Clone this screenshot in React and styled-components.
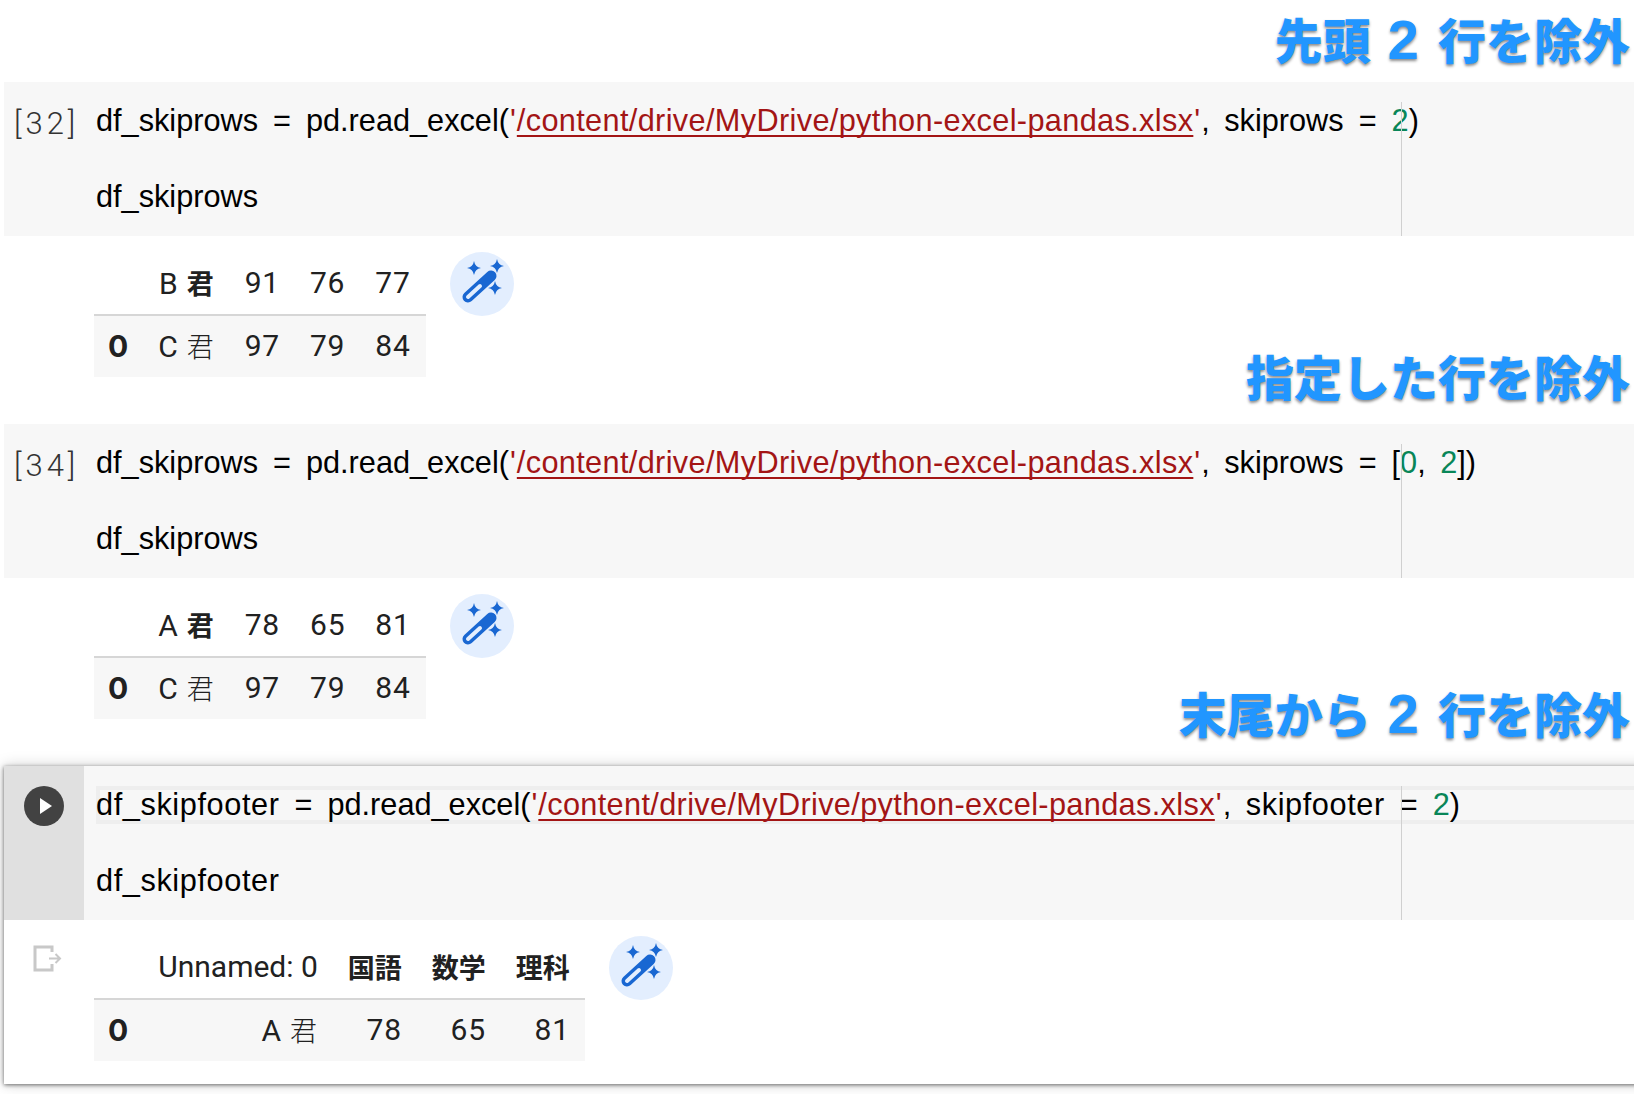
import styled, { createGlobalStyle } from "styled-components";

const GlobalStyle = createGlobalStyle`
  html, body {
    margin: 0;
    background: #fff;
  }
`;

const Page = styled.div`
  width: 1634px;
  height: 1094px;
  overflow: hidden;
  font-family: "Liberation Sans", "Noto Sans CJK JP", sans-serif;
`;

const Header = styled.div`
  height: 82px;
  margin-left: 4px;
  display: flex;
  justify-content: flex-end;
  align-items: flex-end;
`;

const Caption = styled.div`
  margin-left: auto;
  margin-right: 4px;
  margin-bottom: ${(p) => p.$bottom}px;
  align-self: flex-end;
  font-family: "Noto Sans CJK JP", sans-serif;
  font-size: 48px;
  font-weight: 900;
  line-height: 56px;
  white-space: nowrap;
  color: #2196ff;
  -webkit-text-stroke: 8px #fff;
  paint-order: stroke fill;
  text-shadow: 0 2px 3px rgba(0, 0, 0, 0.45);
`;

const CaptionDigit = styled.span`
  margin: 0 19px 0 17px;
  font-family: "Liberation Sans", sans-serif;
  font-size: 56px;
  font-weight: 700;
  line-height: 56px;
`;

const Focused = styled.div`
  margin-left: 4px;
  margin-right: -20px;
  height: 318px;
  background: #fff;
  box-shadow: 0 1px 4px rgba(0, 0, 0, 0.55), 0 0 14px rgba(0, 0, 0, 0.18);
`;

const Cell = styled.div`
  display: flex;
  height: 154px;
  margin-left: ${(p) => (p.$active ? 0 : 4)}px;
  background: #f7f7f7;
`;

const Gutter = styled.div`
  flex: none;
  width: 92px;
  padding: 27px 0 0 10px;
  box-sizing: border-box;
  font-family: Roboto, sans-serif;
  font-size: 31px;
  font-weight: 300;
  line-height: 30px;
  letter-spacing: 4px;
  color: #333;
`;

const RunGutter = styled.div`
  flex: none;
  width: 80px;
  margin-right: 12px;
  padding: 20px 0 0 20px;
  box-sizing: border-box;
  background: #e0e0e0;
`;

const Code = styled.div`
  position: relative;
  flex: 1;
  padding-top: 20px;
  display: flex;
  flex-direction: column;
  gap: 38px;
  font-size: 30.7px;
  color: #000;
`;

const Line = styled.div`
  height: 38px;
  line-height: 38px;
  white-space: pre;
`;

const ActiveLine = styled(Line)`
  box-sizing: border-box;
  margin-right: 20px;
  border: solid #eeeeee;
  border-width: 4px 0 4px 4px;
  line-height: 30px;
  text-indent: -4px;
`;

const Name = styled.span`
  letter-spacing: ${(p) => (p.$wide ? 0.6 : 0)}px;
`;

const Quote = styled.span`
  color: #a31515;
  margin: 0 1px;
`;

const Str = styled.span`
  color: #a31515;
  letter-spacing: 0.35px;
  text-decoration: underline 2px #a31515;
  text-underline-offset: 4px;
  text-decoration-skip-ink: none;
`;

const Sep = styled.span`
  margin-right: 6px;
`;

const Num = styled.span`
  color: #098658;
`;

const Op = styled.span`
  margin: 0 15px;
`;

const Ruler = styled.div`
  position: absolute;
  left: ${(p) => p.$left}px;
  top: 20px;
  bottom: 0;
  width: 1.5px;
  background: #d0d0d0;
`;

const Output = styled.div`
  display: flex;
  align-items: flex-start;
  height: ${(p) => p.$height}px;
  margin-left: 4px;
  padding-top: 16px;
  box-sizing: border-box;
`;

const FocusedOutput = styled(Output)`
  margin-left: 0;
`;

const OutGutter = styled.div`
  flex: none;
  width: 90px;
  padding: 9px 0 0 29px;
  box-sizing: border-box;
`;

const Frame = styled.table`
  border-collapse: collapse;
  font-family: Roboto, "Noto Sans CJK JP", sans-serif;
  font-size: 30px;
  color: #212121;
`;

const HeadCell = styled.th`
  height: 63px;
  padding: 0 15px 2px;
  box-sizing: border-box;
  font-weight: 400;
  text-align: right;
  white-space: nowrap;
  letter-spacing: ${(p) => (p.$wide ? 0.8 : 0)}px;
  border-bottom: 2px solid #d6d6d6;
`;

const Row = styled.tr`
  background: #f7f7f7;
`;

const IndexCell = styled.th`
  height: 62px;
  padding: 0 15px 2px 14px;
  box-sizing: border-box;
  font-family: Inter, sans-serif;
  font-weight: 700;
  text-align: right;
`;

const DataCell = styled.td`
  padding: 0 15px 2px;
  text-align: right;
  white-space: nowrap;
  letter-spacing: 0.8px;
`;

const Kanji = styled.span`
  font-family: "Noto Sans CJK JP", sans-serif;
  font-size: 27px;
  font-weight: ${(p) => (p.$bold ? 700 : 300)};
`;

const Magic = styled.div`
  flex: none;
  width: 64px;
  height: 64px;
  margin-left: 24px;
  border-radius: 50%;
  background: #e3eefe;
`;

const Spark = ({ x, y }) => (
  <path
    d={`M${x} ${y - 7}Q${x + 1} ${y - 1} ${x + 7} ${y}Q${x + 1} ${y + 1} ${x} ${y + 7}Q${x - 1} ${y + 1} ${x - 7} ${y}Q${x - 1} ${y - 1} ${x} ${y - 7}Z`}
    fill="#1967d2"
  />
);

const WandIcon = () => (
  <Magic>
    <svg width="64" height="64" viewBox="0 0 64 64">
      <Spark x={24} y={16} />
      <Spark x={47} y={14} />
      <Spark x={45} y={36} />
      <line x1="18" y1="45" x2="41" y2="24" stroke="#1967d2" strokeWidth="11" strokeLinecap="round" />
      <line x1="18" y1="45" x2="30" y2="34" stroke="#e3eefe" strokeWidth="4" strokeLinecap="round" />
    </svg>
  </Magic>
);

const PlayIcon = () => (
  <svg width="40" height="40" viewBox="0 0 40 40">
    <circle cx="20" cy="20" r="20" fill="#424242" />
    <path d="M16 12L28 20L16 28Z" fill="#fff" />
  </svg>
);

const OutputIcon = () => (
  <svg width="30" height="28" viewBox="0 0 30 28" fill="none">
    <path d="M19 7V2H2V25H19V19" stroke="#c8c8c8" strokeWidth="3" />
    <path d="M16 13.500H27M22.500 9L27 13.500L22.500 18" stroke="#c8c8c8" strokeWidth="2" />
  </svg>
);

const PathString = () => (
  <>
    <Quote>'</Quote>
    <Str>/content/drive/MyDrive/python-excel-pandas.xlsx</Str>
    <Quote>'</Quote>
    <Sep>,</Sep>{" "}
  </>
);

const ResultTable = ({ head, row, wideHead }) => (
  <Frame>
    <thead>
      <tr>
        <HeadCell />
        {head.map((h, i) => (
          <HeadCell key={i} $wide={wideHead}>
            {h}
          </HeadCell>
        ))}
      </tr>
    </thead>
    <tbody>
      <Row>
        <IndexCell>0</IndexCell>
        {row.map((c, i) => (
          <DataCell key={i}>{c}</DataCell>
        ))}
      </Row>
    </tbody>
  </Frame>
);

const App = () => (
  <Page>
    <GlobalStyle />

    <Header>
      <Caption $bottom={14}>
        先頭<CaptionDigit>2</CaptionDigit>行を除外
      </Caption>
    </Header>
    <Cell>
      <Gutter>[32]</Gutter>
      <Code>
        <Line>
          df_skiprows<Op>=</Op>pd.read_excel(<PathString />skiprows<Op>=</Op>
          <Num>2</Num>)
        </Line>
        <Line>df_skiprows</Line>
        <Ruler $left={1304.5} />
      </Code>
    </Cell>
    <Output $height={188}>
      <OutGutter />
      <ResultTable
        wideHead
        head={[<>B <Kanji $bold>君</Kanji></>, "91", "76", "77"]}
        row={[<>C <Kanji>君</Kanji></>, "97", "79", "84"]}
      />
      <WandIcon />
      <Caption $bottom={21}>指定した行を除外</Caption>
    </Output>

    <Cell>
      <Gutter>[34]</Gutter>
      <Code>
        <Line>
          df_skiprows<Op>=</Op>pd.read_excel(<PathString />skiprows<Op>=</Op>[<Num>0</Num><Sep>,</Sep> <Num>2</Num>])
        </Line>
        <Line>df_skiprows</Line>
        <Ruler $left={1304.5} />
      </Code>
    </Cell>
    <Output $height={188}>
      <OutGutter />
      <ResultTable
        wideHead
        head={[<>A <Kanji $bold>君</Kanji></>, "78", "65", "81"]}
        row={[<>C <Kanji>君</Kanji></>, "97", "79", "84"]}
      />
      <WandIcon />
      <Caption $bottom={24}>
        末尾から<CaptionDigit>2</CaptionDigit>行を除外
      </Caption>
    </Output>

    <Focused>
      <Cell $active>
        <RunGutter>
          <PlayIcon />
        </RunGutter>
        <Code>
          <ActiveLine>
            <Name $wide>df_skipfooter</Name><Op>=</Op>pd.read_excel(<PathString /><Name $wide>skipfooter</Name><Op>=</Op>
            <Num>2</Num>)
          </ActiveLine>
          <Line>
            <Name $wide>df_skipfooter</Name>
          </Line>
          <Ruler $left={1304.5} />
        </Code>
      </Cell>
      <FocusedOutput $height={164}>
        <OutGutter>
          <OutputIcon />
        </OutGutter>
        <ResultTable
          head={[
            "Unnamed: 0",
            <Kanji $bold>国語</Kanji>,
            <Kanji $bold>数学</Kanji>,
            <Kanji $bold>理科</Kanji>,
          ]}
          row={[<>A <Kanji>君</Kanji></>, "78", "65", "81"]}
        />
        <WandIcon />
      </FocusedOutput>
    </Focused>
  </Page>
);

export default App;
